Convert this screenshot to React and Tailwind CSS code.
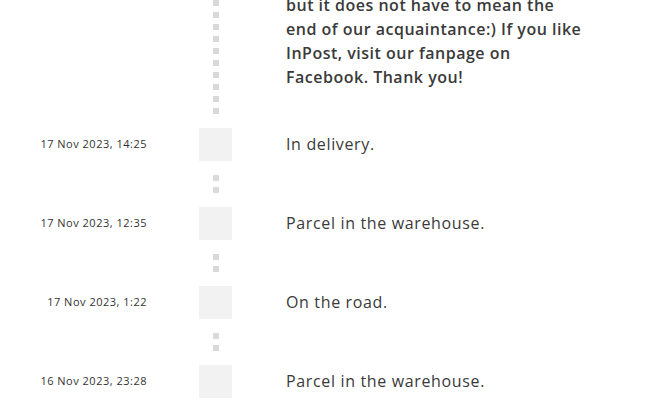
import React from "react";

const font = { fontFamily: '"Open Sans", "Liberation Sans", sans-serif' };

function Dot() {
  return <div className="w-[6px] h-[6px] bg-[#d9d9d9]" />;
}

function Row({ date, text }) {
  return (
    <div className="grid grid-cols-[199px_33px_1fr] h-[33px] items-center">
      <div className="text-right pr-[52px] text-[11px] text-[#333333] tracking-[0.5px] whitespace-nowrap">
        {date}
      </div>
      <div className="w-[33px] h-[33px] bg-[#f2f2f2]" />
      <div className="pl-[54px] pb-[1px] text-[16px] text-[#3a3a3a] tracking-[0.65px] whitespace-nowrap">
        {text}
      </div>
    </div>
  );
}

function Connector() {
  return (
    <div className="grid grid-cols-[199px_33px_1fr] h-[46px]">
      <div />
      <div className="flex flex-col items-center justify-center gap-[6px]">
        <Dot />
        <Dot />
      </div>
      <div />
    </div>
  );
}

export default function App() {
  const rows = [
    ["17 Nov 2023, 14:25", "In delivery."],
    ["17 Nov 2023, 12:35", "Parcel in the warehouse."],
    ["17 Nov 2023, 1:22", "On the road."],
    ["16 Nov 2023, 23:28", "Parcel in the warehouse."],
  ];
  return (
    <div className="w-[660px] h-[405px] overflow-hidden bg-white" style={font}>
      <div className="grid grid-cols-[199px_33px_1fr] h-[128px]">
        <div />
        <div className="flex flex-col items-center gap-[6px]">
          {Array.from({ length: 10 }).map((_, i) => (
            <Dot key={i} />
          ))}
        </div>
        <div className="pl-[54px] -mt-[7px] text-[16px] leading-[24px] font-semibold text-[#3a3a3a] tracking-[0.5px]">
          <div className="whitespace-nowrap">but it does not have to mean the</div>
          <div className="whitespace-nowrap">end of our acquaintance:) If you like</div>
          <div className="whitespace-nowrap">InPost, visit our fanpage on</div>
          <div className="whitespace-nowrap">Facebook. Thank you!</div>
        </div>
      </div>
      {rows.map(([d, t], i) => (
        <React.Fragment key={i}>
          <Row date={d} text={t} />
          {i < rows.length - 1 && <Connector />}
        </React.Fragment>
      ))}
    </div>
  );
}
